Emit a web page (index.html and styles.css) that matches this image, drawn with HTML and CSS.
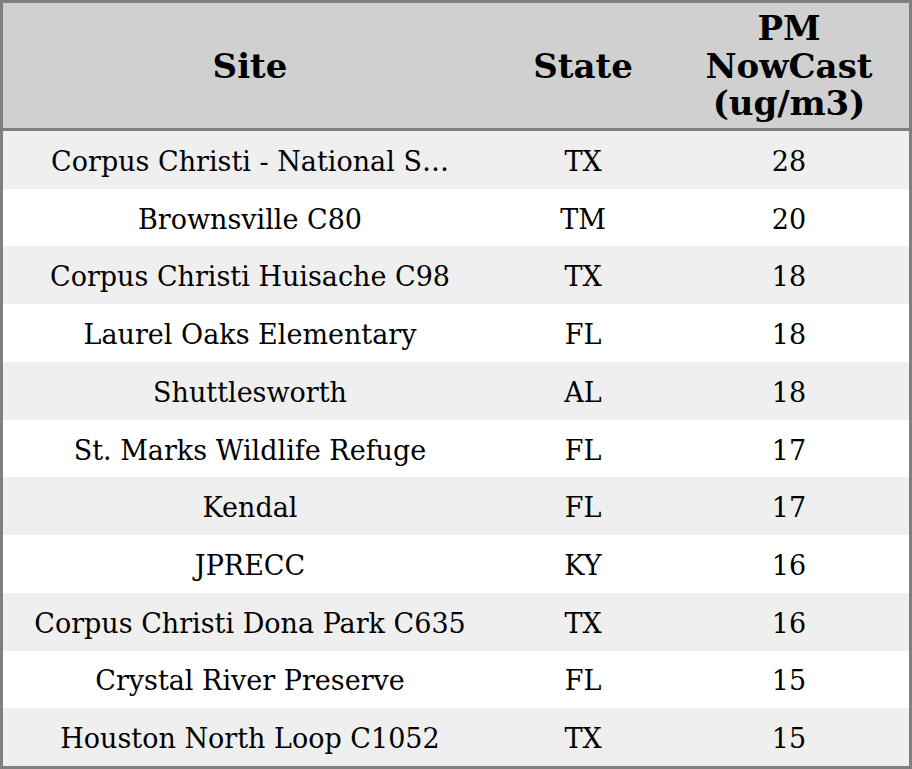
FILE: index.html
```html
<!DOCTYPE html>
<html>
<head>
<meta charset="utf-8">
<link rel="stylesheet" href="styles.css">
</head>
<body>
<div class="table">
  <div class="row head">
    <div class="cell">Site</div>
    <div class="cell">State</div>
    <div class="cell">PM<br>NowCast<br>(ug/m3)</div>
  </div>
  <div class="row odd"><div class="cell">Corpus Christi - National S…</div><div class="cell">TX</div><div class="cell">28</div></div>
  <div class="row"><div class="cell">Brownsville C80</div><div class="cell">TM</div><div class="cell">20</div></div>
  <div class="row odd"><div class="cell">Corpus Christi Huisache C98</div><div class="cell">TX</div><div class="cell">18</div></div>
  <div class="row"><div class="cell">Laurel Oaks Elementary</div><div class="cell">FL</div><div class="cell">18</div></div>
  <div class="row odd"><div class="cell">Shuttlesworth</div><div class="cell">AL</div><div class="cell">18</div></div>
  <div class="row"><div class="cell">St. Marks Wildlife Refuge</div><div class="cell">FL</div><div class="cell">17</div></div>
  <div class="row odd"><div class="cell">Kendal</div><div class="cell">FL</div><div class="cell">17</div></div>
  <div class="row"><div class="cell">JPRECC</div><div class="cell">KY</div><div class="cell">16</div></div>
  <div class="row odd"><div class="cell">Corpus Christi Dona Park C635</div><div class="cell">TX</div><div class="cell">16</div></div>
  <div class="row"><div class="cell">Crystal River Preserve</div><div class="cell">FL</div><div class="cell">15</div></div>
  <div class="row odd"><div class="cell">Houston North Loop C1052</div><div class="cell">TX</div><div class="cell">15</div></div>
</div>
</body>
</html>
```
FILE: styles.css
```css
html, body {
  margin: 0;
  padding: 0;
  background: #ffffff;
}
.table {
  width: 912px;
  height: 769px;
  box-sizing: border-box;
  border: 3px solid #808080;
  display: flex;
  flex-direction: column;
  font-family: "DejaVu Serif", serif;
  color: #000;
}
.row {
  display: grid;
  grid-template-columns: 494px 172px 240px;
  flex: 1 1 0;
  min-height: 0;
  font-size: 27px;
  background: #ffffff;
}
.row.odd {
  background: #efefef;
}
.row.head {
  flex: 0 0 128px;
  box-sizing: border-box;
  background: #d0d0d0;
  border-bottom: 3px solid #808080;
  font-size: 34px;
  font-weight: bold;
}
.cell {
  display: flex;
  align-items: center;
  justify-content: center;
  text-align: center;
  white-space: nowrap;
  min-width: 0;
  padding-top: 3px;
}
.head .cell {
  line-height: 37.5px;
  padding-top: 2px;
}
```
